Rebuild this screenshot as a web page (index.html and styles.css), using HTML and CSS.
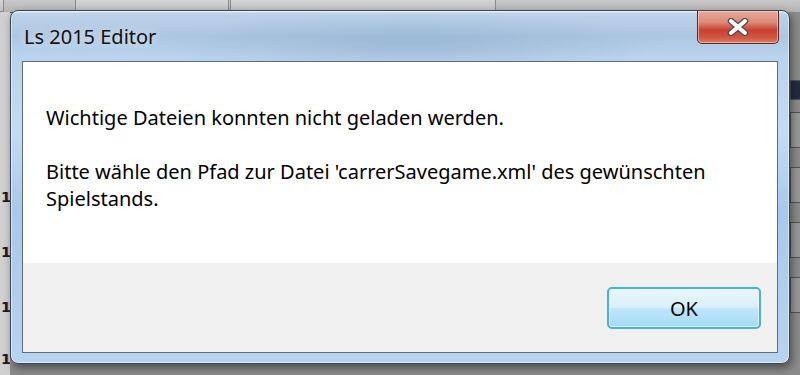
FILE: index.html
```html
<!DOCTYPE html>
<html lang="de">
<head>
<meta charset="utf-8">
<title>Ls 2015 Editor</title>
<link rel="stylesheet" href="styles.css">
</head>
<body>
<div class="desk">
  <div class="tabs">
    <div class="tab tab-a"></div>
    <div class="tab tab-b"></div>
    <div class="tab tab-c"></div>
  </div>
  <div class="left-col">
    <span class="digit d1">1</span>
    <span class="digit d2">1</span>
    <span class="digit d3">1</span>
    <span class="digit d4">1</span>
  </div>
  <div class="right-col">
    <div class="rbox rb0"></div>
    <div class="rbox rb1"></div>
    <div class="rbox rb2"></div>
    <div class="rbox rb3"></div>
    <div class="rbox rb4"></div>
  </div>
  <div class="window">
    <div class="titlebar">
      <div class="title">Ls 2015 Editor</div>
      <div class="close">
        <svg width="26" height="18" viewBox="0 0 26 18">
          <path d="M6 3 L20 15 M20 3 L6 15" stroke="#4a4f58" stroke-width="6.5" stroke-linecap="round"/>
          <path d="M6 3 L20 15 M20 3 L6 15" stroke="#ffffff" stroke-width="4" stroke-linecap="round"/>
        </svg>
      </div>
    </div>
    <div class="client">
      <div class="message">
        <p>Wichtige Dateien konnten nicht geladen werden.</p>
        <p>Bitte wähle den Pfad zur Datei 'carrerSavegame.xml' des gewünschten Spielstands.</p>
      </div>
      <div class="footer">
        <button class="ok">OK</button>
      </div>
    </div>
  </div>
</div>
</body>
</html>
```
FILE: styles.css
```css
html, body {
  margin: 0;
  padding: 0;
  width: 800px;
  height: 375px;
  overflow: hidden;
}
body {
  background: #9a9a9a;
  font-family: "Noto Sans", "Open Sans", sans-serif;
}
.desk {
  position: relative;
  width: 800px;
  height: 375px;
  background: linear-gradient(to bottom, #c6c6c6 0, #c2c2c2 60%, #8a8a8a 100%);
  overflow: hidden;
}
.tabs {
  position: absolute;
  left: 0;
  top: 0;
  width: 800px;
  height: 12px;
  background: linear-gradient(to bottom, #c8c8c8, #b4b4b4);
  border-bottom: 1px solid #4a4a4a;
}
.tab {
  position: absolute;
  top: 0;
  height: 11px;
  border: 1px solid #8a8a8a;
  border-top: 0;
  background: linear-gradient(to bottom, #d4d4d4, #c0c0c0);
}
.tab-a { left: -4px; width: 6px; }
.tab-b { left: 75px; width: 152px; }
.tab-c { left: 230px; width: 264px; }
.left-col {
  position: absolute;
  left: 0;
  top: 12px;
  width: 10px;
  height: 363px;
  background: #d0d0d0;
}
.digit {
  position: absolute;
  left: 1px;
  font-family: "DejaVu Sans", sans-serif;
  font-size: 14px;
  font-weight: bold;
  line-height: 18px;
  color: #1a1a30;
  text-shadow: 1px 0 #e0a040;
}
.d1 { top: 176px; }
.d2 { top: 231px; }
.d3 { top: 286px; }
.d4 { top: 338px; }
.right-col {
  position: absolute;
  right: 0;
  top: 12px;
  width: 14px;
  height: 363px;
  background: #8c8c8c;
}
.rbox {
  position: absolute;
  left: 4px;
  width: 12px;
  height: 34px;
  border: 1px solid #555;
  background: #9a9a9a;
}
.rb0 { top: 68px; height: 18px; background: #222c40; }
.rb1 { top: 100px; }
.rb2 { top: 155px; }
.rb3 { top: 210px; }
.rb4 { top: 265px; }

.window {
  position: absolute;
  left: 10px;
  top: 10px;
  width: 780px;
  height: 354px;
  box-sizing: border-box;
  border: 1px solid #3d4550;
  border-radius: 8px;
  background:
    radial-gradient(ellipse 260px 30px at 400px 32px, rgba(140,170,205,0.55), rgba(140,170,205,0) 100%),
    linear-gradient(to bottom, #dbe7f3 0, #bcd2e9 3px, #aec7e1 25px, #b9d3ee 45px, #c3dcf5 120px, #a8c9ec 200px, #b6d3f0 100%);
  box-shadow: 0 0 0 1px rgba(255,255,255,0.5) inset, 2px 4px 8px rgba(0,0,0,0.45);
  display: flex;
  flex-direction: column;
  padding: 0 11px 10px 11px;
}
.titlebar {
  height: 50px;
  flex: none;
  display: flex;
  align-items: flex-start;
  justify-content: space-between;
}
.title {
  margin-top: 12px;
  margin-left: 2px;
  font-size: 20px;
  color: #111;
  text-shadow: 0 0 8px rgba(255,255,255,0.8);
}
.close {
  width: 82px;
  height: 33px;
  margin-right: -1px;
  box-sizing: border-box;
  border: 1px solid #5b2a24;
  border-top: 0;
  border-radius: 0 0 5px 5px;
  background: linear-gradient(to bottom, #e9a99a 0, #dc8a78 35%, #c8402e 60%, #d25a45 85%, #dc7d68 100%);
  box-shadow: inset 0 0 0 1px rgba(255,220,210,0.55);
  display: flex;
  align-items: center;
  justify-content: center;
}
.client {
  flex: 1;
  border: 1px solid #626b76;
  background: #f0f0f0;
  display: flex;
  flex-direction: column;
}
.message {
  background: #ffffff;
  height: 201px;
  flex: none;
  padding: 0 23px;
  box-sizing: border-box;
  padding-top: 42px;
  font-size: 20px;
  line-height: 27px;
  color: #000;
}
.message p {
  margin: 0 0 27px 0;
  width: 690px;
}
.footer {
  flex: 1;
  display: flex;
  justify-content: flex-end;
  align-items: flex-start;
  padding: 24px 16px 0 0;
}
.ok {
  width: 154px;
  height: 42px;
  border: 2px solid #3fb5e6;
  border-radius: 5px;
  background: linear-gradient(to bottom, #eaf6fd 0, #d9f0fc 48%, #bee6fd 52%, #a7d9f5 100%);
  box-shadow: inset 0 0 0 1px rgba(255,255,255,0.7);
  font-family: "Noto Sans", "Open Sans", sans-serif;
  font-size: 20px;
  color: #000;
  padding: 0;
}
```
